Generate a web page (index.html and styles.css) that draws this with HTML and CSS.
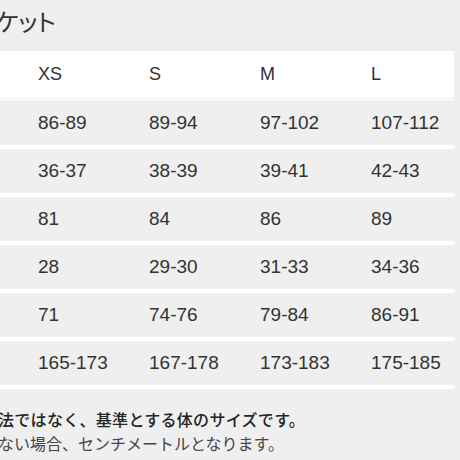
FILE: index.html
```html
<!DOCTYPE html>
<html lang="ja">
<head>
<meta charset="utf-8">
<link rel="stylesheet" href="styles.css">
</head>
<body>
<div class="page">
  <div class="title">ケット</div>
  <div class="size-table">
    <div class="row head">
      <div class="cell"></div><div class="cell">XS</div><div class="cell">S</div><div class="cell">M</div><div class="cell">L</div>
    </div>
    <div class="row">
      <div class="cell"></div><div class="cell">86-89</div><div class="cell">89-94</div><div class="cell">97-102</div><div class="cell">107-112</div>
    </div>
    <div class="row">
      <div class="cell"></div><div class="cell">36-37</div><div class="cell">38-39</div><div class="cell">39-41</div><div class="cell">42-43</div>
    </div>
    <div class="row">
      <div class="cell"></div><div class="cell">81</div><div class="cell">84</div><div class="cell">86</div><div class="cell">89</div>
    </div>
    <div class="row">
      <div class="cell"></div><div class="cell">28</div><div class="cell">29-30</div><div class="cell">31-33</div><div class="cell">34-36</div>
    </div>
    <div class="row">
      <div class="cell"></div><div class="cell">71</div><div class="cell">74-76</div><div class="cell">79-84</div><div class="cell">86-91</div>
    </div>
    <div class="row">
      <div class="cell"></div><div class="cell">165-173</div><div class="cell">167-178</div><div class="cell">173-183</div><div class="cell">175-185</div>
    </div>
  </div>
  <div class="notes">
    <p class="note strong">法ではなく、基準とする体のサイズです。</p>
    <p class="note">ない場合、センチメートルとなります。</p>
  </div>
</div>
</body>
</html>
```

FILE: styles.css
```css
html, body {
  margin: 0;
  padding: 0;
  background: #efefef;
  overflow: hidden;
}

.page {
  width: 460px;
  height: 460px;
  overflow: hidden;
  color: #333333;
  font-family: "Liberation Sans", "Noto Sans CJK JP", sans-serif;
}

.title {
  height: 51px;
  box-sizing: border-box;
  padding-top: 7px;
  margin-left: -4px;
  font-family: "Noto Sans CJK JP", sans-serif;
  font-size: 24px;
  line-height: 28px;
  font-feature-settings: "palt";
  color: #333333;
  white-space: nowrap;
}

.size-table {
  width: 454px;
}

.row {
  display: grid;
  grid-template-columns: 38px 111px 111px 111px 1fr;
  height: 44px;
  border-bottom: 4px solid #ffffff;
  font-size: 19px;
  color: #333333;
}

.row.head {
  height: 46px;
  background: #ffffff;
  border-bottom-color: #f7f7f7;
  font-size: 18px;
}

.cell {
  display: flex;
  align-items: center;
  white-space: nowrap;
}

.notes {
  margin-top: 18px;
  margin-left: -2px;
  font-family: "Noto Sans CJK JP", sans-serif;
  font-size: 16px;
  line-height: 24px;
  white-space: nowrap;
}

.note {
  margin: 0;
  color: #444444;
  font-weight: 400;
}

.note.strong {
  color: #222222;
  font-weight: 500;
  letter-spacing: 0.3px;
}
```
